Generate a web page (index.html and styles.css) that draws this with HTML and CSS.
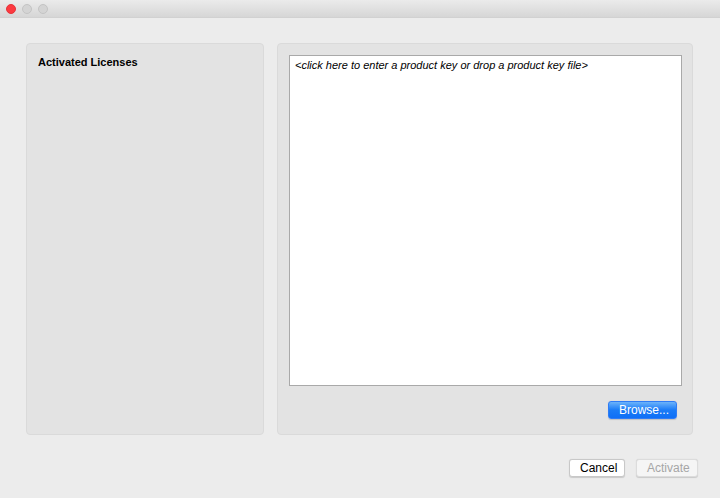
FILE: index.html
```html
<!DOCTYPE html>
<html>
<head>
    <title>Activate License</title>
    <link rel="stylesheet" href="styles.css">
</head>
<body>
    <div class="window">
        <div class="titlebar">
            <span class="light close"></span>
            <span class="light"></span>
            <span class="light"></span>
        </div>

        <div class="main">
            <div class="panel licenses">
                <h1>Activated Licenses</h1>
            </div>
            <div class="panel keys">
                <div class="keybox">&lt;click here to enter a product key or drop a product key file&gt;</div>
                <div class="browse-row">
                    <button class="btn primary">Browse...</button>
                </div>
            </div>
        </div>

        <div class="footer">
            <button class="btn">Cancel</button>
            <button class="btn" disabled>Activate</button>
        </div>
    </div>
</body>
</html>
```

FILE: styles.css
```css
body {
    margin: 0;
    padding: 0;
    background: #ececec;
    font-family: "Liberation Sans", Arial, sans-serif;
    font-size: 11px;
    color: #000;
}
.window {
    width: 720px;
    height: 498px;
    display: flex;
    flex-direction: column;
}

.titlebar {
    height: 17px;
    border-bottom: 1px solid #d1d1d1;
    background: linear-gradient(#ebebeb, #d6d6d6);
    display: flex;
    align-items: center;
    gap: 6px;
    padding-left: 6px;
}
.light {
    width: 10px;
    height: 10px;
    border-radius: 50%;
    background: #d4d4d4;
    border: 0.5px solid #c4c4c4;
    box-sizing: border-box;
}
.light.close {
    background: #fc3a40;
    border-color: #e5343a;
}

.main {
    display: grid;
    grid-template-columns: 238px 416px;
    gap: 13px;
    padding: 25px 0 0 26px;
    height: 392px;
}
.panel {
    background: #e3e3e3;
    border: 1px solid #dadada;
    border-radius: 4px;
    box-sizing: border-box;
}
.licenses { padding: 12px 11px; }
.licenses h1 {
    margin: 0;
    font-size: 11px;
    font-weight: bold;
}

.keys {
    padding: 11px 10px 0 11px;
    display: flex;
    flex-direction: column;
}
.keybox {
    height: 331px;
    box-sizing: border-box;
    background: #fff;
    border: 1px solid #a9a9a9;
    padding: 3px 5px;
    font-style: italic;
}
.browse-row {
    display: flex;
    justify-content: flex-end;
    padding: 15px 5px 0 0;
}

.btn {
    font-family: inherit;
    font-size: 12px;
    height: 18px;
    padding: 0 10px;
    border-radius: 3px;
    border: 1px solid #c8c8c8;
    background: #fff;
    color: #000;
    box-shadow: 0 0.5px 1px rgba(0, 0, 0, 0.15);
}
.btn.primary {
    width: 69px;
    border-color: #2f7cf6;
    background: linear-gradient(#6cb3fa, #1a7bf7 50%, #0f6ff6);
    color: #fff;
}
.btn:disabled {
    color: #a6a6a6;
    background: #f5f5f5;
    border-color: #dcdcdc;
}

.footer {
    display: flex;
    justify-content: flex-end;
    gap: 11px;
    padding: 24px 22px 0 0;
}
.footer .btn:first-child { width: 56px; }
.footer .btn:last-child { width: 62px; }
```
